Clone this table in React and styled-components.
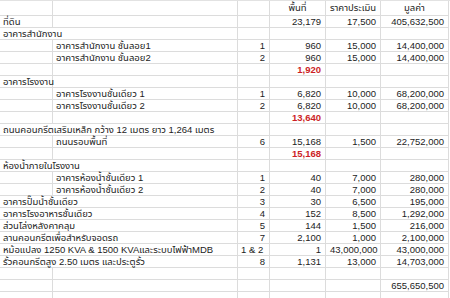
import React from 'react';
import styled, { createGlobalStyle } from 'styled-components';

const GlobalStyle = createGlobalStyle`
  html, body {
    margin: 0;
    padding: 0;
    background: #ffffff;
  }
  body {
    font-family: Tahoma, "Liberation Sans", "Noto Sans Thai", "Noto Sans", sans-serif;
  }
`;

const Sheet = styled.div`
  width: 450px;
  height: 298px;
  overflow: hidden;
  background: #fff;
  border-top: 1px solid #e2e2e2;
  box-sizing: border-box;
`;

const Row = styled.div`
  display: grid;
  grid-template-columns: 53px 185px 32px 56px 55px 68px 1px;
  height: ${(p) => p.h || 12}px;
`;

const Cell = styled.div`
  grid-column: span ${(p) => p.span || 1};
  border-right: 1px solid #dcdcdc;
  border-bottom: 1px solid #dcdcdc;
  padding: 0 ${(p) => (p.align === 'right' ? '4px' : '3px')};
  font-size: 9.5px;
  line-height: ${(p) => (p.h || 12) - 1}px;
  color: ${(p) => (p.red ? '#cc1f26' : '#1c1c1c')};
  font-weight: ${(p) => (p.red ? 700 : 400)};
  text-align: ${(p) => p.align || 'left'};
  white-space: nowrap;
  overflow: visible;
`;

// A: label in first column (wide = spills over B), B: label in second column
const rows = [
  { h: 15, head: true },
  { a: 'ที่ดิน', d: '23,179', e: '17,500', f: '405,632,500' },
  { a: 'อาคารสำนักงาน', wide: true },
  { b: 'อาคารสำนักงาน ชั้นลอย1', c: '1', d: '960', e: '15,000', f: '14,400,000' },
  { b: 'อาคารสำนักงาน ชั้นลอย2', c: '2', d: '960', e: '15,000', f: '14,400,000' },
  { d: '1,920', red: true },
  { a: 'อาคารโรงงาน' },
  { b: 'อาคารโรงงานชั้นเดียว 1', c: '1', d: '6,820', e: '10,000', f: '68,200,000' },
  { b: 'อาคารโรงงานชั้นเดียว 2', c: '2', d: '6,820', e: '10,000', f: '68,200,000' },
  { d: '13,640', red: true },
  { a: 'ถนนคอนกรีตเสริมเหล็ก กว้าง 12 เมตร ยาว 1,264 เมตร', wide: true },
  { b: 'ถนนรอบพื้นที่', c: '6', d: '15,168', e: '1,500', f: '22,752,000' },
  { d: '15,168', red: true },
  { a: 'ห้องน้ำภายในโรงงาน', wide: true },
  { b: 'อาคารห้องน้ำชั้นเดียว 1', c: '1', d: '40', e: '7,000', f: '280,000' },
  { b: 'อาคารห้องน้ำชั้นเดียว 2', c: '2', d: '40', e: '7,000', f: '280,000' },
  { a: 'อาคารปั๊มน้ำชั้นเดียว', wide: true, c: '3', d: '30', e: '6,500', f: '195,000' },
  { a: 'อาคารโรงอาหารชั้นเดียว', wide: true, c: '4', d: '152', e: '8,500', f: '1,292,000' },
  { a: 'ส่วนโล่งหลังคาคลุม', wide: true, c: '5', d: '144', e: '1,500', f: '216,000' },
  { a: 'ลานคอนกรีตเพื่อสำหรับจอดรถ', wide: true, c: '7', d: '2,100', e: '1,000', f: '2,100,000' },
  { a: 'หม้อแปลง 1250 KVA & 1500 KVAและระบบไฟฟ้าMDB', wide: true, c: '1 & 2', cText: true, d: '1', e: '43,000,000', f: '43,000,000' },
  { a: 'รั้วคอนกรีตสูง 2.50 เมตร และประตูรั้ว', wide: true, c: '8', d: '1,131', e: '13,000', f: '14,703,000' },
  {},
  { f: '655,650,500' },
  {},
  {},
];

const App = () => (
  <>
    <GlobalStyle />
    <Sheet>
      {rows.map((r, i) => {
        const h = r.h || 12;
        if (r.head) {
          return (
            <Row key={i} h={h}>
              <Cell h={h} />
              <Cell h={h} />
              <Cell h={h} />
              <Cell h={h} align="center">พื้นที่</Cell>
              <Cell h={h} align="center">ราคาประเมิน</Cell>
              <Cell h={h} align="center">มูลค่า</Cell>
            </Row>
          );
        }
        return (
          <Row key={i} h={h}>
            {r.wide ? (
              <Cell h={h} span={2}>{r.a}</Cell>
            ) : (
              <>
                <Cell h={h}>{r.a}</Cell>
                <Cell h={h}>{r.b}</Cell>
              </>
            )}
            <Cell h={h} align={r.cText ? 'left' : 'right'}>{r.c}</Cell>
            <Cell h={h} align="right" red={r.red}>{r.d}</Cell>
            <Cell h={h} align="right">{r.e}</Cell>
            <Cell h={h} align="right">{r.f}</Cell>
          </Row>
        );
      })}
    </Sheet>
  </>
);

export default App;
